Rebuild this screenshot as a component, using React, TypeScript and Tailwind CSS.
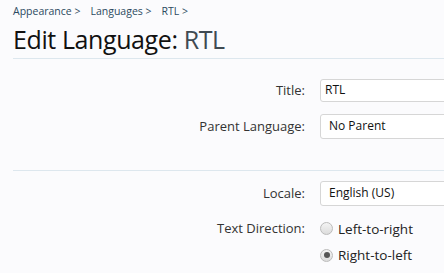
const font = { fontFamily: '"Open Sans", "Noto Sans", sans-serif' };

type RowProps = { label: string; children: React.ReactNode; className?: string };

const Row = ({ label, children, className }: RowProps) => (
  <div className={"flex items-center " + (className ?? "")}>
    <div className="w-[292px] shrink-0 text-right text-[13px] text-[#333]">{label}</div>
    <div className="ml-[15px] flex-1">{children}</div>
  </div>
);

const Box = ({ value, h }: { value: string; h: string }) => (
  <div
    className={
      "w-[360px] flex items-center rounded-[3px] border border-[#d6d6d6] bg-white text-[12px] text-[#111] " + h
    }
  >
    {value}
  </div>
);

const Radio = ({ label, checked }: { label: string; checked?: boolean }) => (
  <div className="flex items-center gap-[5px] text-[13.5px] text-[#222]">
    <span className="flex h-[13px] w-[13px] items-center justify-center rounded-full border border-[#bbb] bg-gradient-to-b from-[#f4f4f4] to-[#dcdcdc]">
      {checked && <span className="h-[6px] w-[6px] rounded-full bg-[#555]" />}
    </span>
    {label}
  </div>
);

export default function App() {
  return (
    <div className="h-[273px] w-[444px] overflow-hidden bg-[#fbfbfd]" style={font}>
      <div className="pl-[13px] pt-[4px]">
        <div className="flex gap-[10px] text-[10.5px] text-[#2c4a60]">
          <span>Appearance &gt;</span>
          <span>Languages &gt;</span>
          <span>RTL &gt;</span>
        </div>
        <h1 className="mt-[2px] text-[25px] leading-[34px] tracking-[-0.4px] text-[#111]">
          Edit Language: <span className="text-[#3f4a52]">RTL</span>
        </h1>
        <div className="mt-[2px] h-px bg-[#dde7ee]" />
      </div>

      <div className="pl-[13px]">
        <Row label="Title:" className="mt-[20px]">
          <Box value="RTL" h="h-[23px] pl-[4px]" />
        </Row>
        <Row label="Parent Language:" className="mt-[12px]">
          <Box value="No Parent" h="h-[25px] pl-[8px]" />
        </Row>
        <div className="mt-[31px] h-px bg-[#dde7ee]" />
        <Row label="Locale:" className="mt-[10px]">
          <Box value="English (US)" h="h-[25px] pl-[8px]" />
        </Row>
        <Row label="Text Direction:" className="mt-[13px]">
          <Radio label="Left-to-right" />
        </Row>
        <Row label="" className="mt-[6px]">
          <Radio label="Right-to-left" checked />
        </Row>
      </div>
    </div>
  );
}
